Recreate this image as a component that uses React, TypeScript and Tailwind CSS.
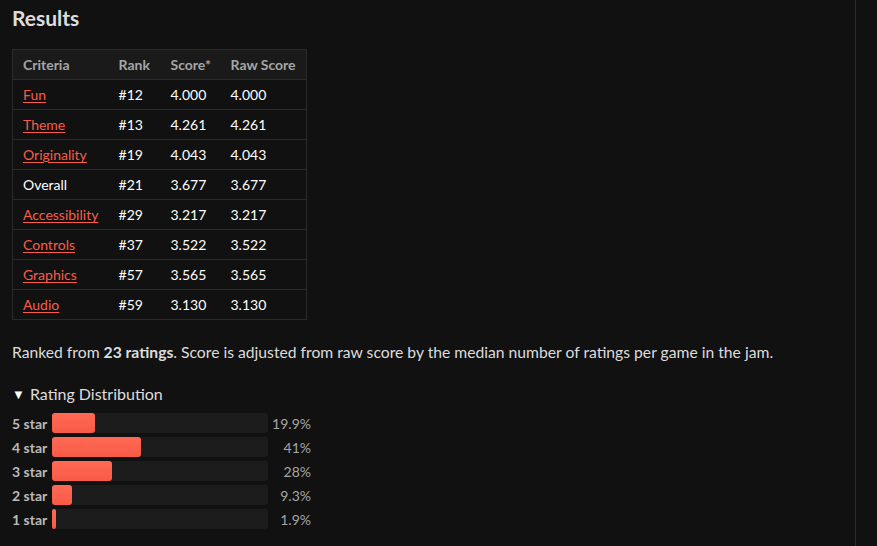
const rows = [
  { name: "Fun", rank: 12, score: "4.000", raw: "4.000", link: true },
  { name: "Theme", rank: 13, score: "4.261", raw: "4.261", link: true },
  { name: "Originality", rank: 19, score: "4.043", raw: "4.043", link: true },
  { name: "Overall", rank: 21, score: "3.677", raw: "3.677", link: false },
  { name: "Accessibility", rank: 29, score: "3.217", raw: "3.217", link: true },
  { name: "Controls", rank: 37, score: "3.522", raw: "3.522", link: true },
  { name: "Graphics", rank: 57, score: "3.565", raw: "3.565", link: true },
  { name: "Audio", rank: 59, score: "3.130", raw: "3.130", link: true },
];

const dist = [
  { stars: 5, pct: 19.9, label: "19.9%" },
  { stars: 4, pct: 41, label: "41%" },
  { stars: 3, pct: 28, label: "28%" },
  { stars: 2, pct: 9.3, label: "9.3%" },
  { stars: 1, pct: 1.9, label: "1.9%" },
];

export default function App() {
  return (
    <div className="min-h-[546px] w-[877px] bg-[#111111] font-['Lato',sans-serif] text-[#dddddd]">
      <div className="w-[856px] min-h-[546px] border-r border-[#2c2c2c] pl-3 pt-[4px]">
        <h2 className="text-[21px] font-bold leading-[28px] text-[#dddddd]">Results</h2>

        {/* Criteria table */}
        <table className="mt-[17px] w-[295px] table-fixed border-collapse border border-[#2a2a2a] text-[14px]">
          <thead>
            <tr className="bg-[#1a1a1a]">
              <th className="h-[30px] w-[96px] px-[10px] text-left font-bold text-[#a6a6a6]">Criteria</th>
              <th className="w-[52px] px-[10px] text-left font-bold text-[#a6a6a6]">Rank</th>
              <th className="w-[60px] px-[10px] text-left font-bold text-[#a6a6a6]">Score*</th>
              <th className="w-[86px] px-[10px] text-left font-bold text-[#a6a6a6] whitespace-nowrap">Raw Score</th>
            </tr>
          </thead>
          <tbody>
            {rows.map((r) => (
              <tr key={r.name} className="border-t border-[#2a2a2a]">
                <td className="h-[30px] px-[10px] whitespace-nowrap">
                  {r.link ? (
                    <a href="#" className="text-[#fa5c48] underline underline-offset-2">
                      {r.name}
                    </a>
                  ) : (
                    <span className="text-white">{r.name}</span>
                  )}
                </td>
                <td className="px-[10px] text-white">#{r.rank}</td>
                <td className="px-[10px] text-white">{r.score}</td>
                <td className="px-[10px] text-white">{r.raw}</td>
              </tr>
            ))}
          </tbody>
        </table>

        <p className="mt-[20px] text-[15.7px] leading-[24px]">
          Ranked from <strong className="font-bold">23 ratings</strong>. Score is adjusted from raw score by the
          median number of ratings per game in the jam.
        </p>

        {/* Rating distribution */}
        <div className="mt-[18px] flex items-center gap-[5px] text-[16px] leading-[24px]">
          <span className="text-[13px] leading-none text-white">▼</span>
          <span>Rating Distribution</span>
        </div>
        <div className="mt-[7px] flex flex-col gap-[4px]">
          {dist.map((d) => (
            <div key={d.stars} className="flex h-[20px] items-center text-[14px]">
              <span className="w-[40px] font-bold text-[#bbbbbb]">{d.stars} star</span>
              <div className="h-[20px] w-[216px] rounded-[3px] bg-[#1c1c1c]">
                <div
                  className="h-full rounded-[3px] bg-gradient-to-b from-[#ff6a55] to-[#f75a45]"
                  style={{ width: `${d.pct}%` }}
                />
              </div>
              <span className="w-[43px] text-right text-[#a6a6a6]">{d.label}</span>
            </div>
          ))}
        </div>
      </div>
    </div>
  );
}
